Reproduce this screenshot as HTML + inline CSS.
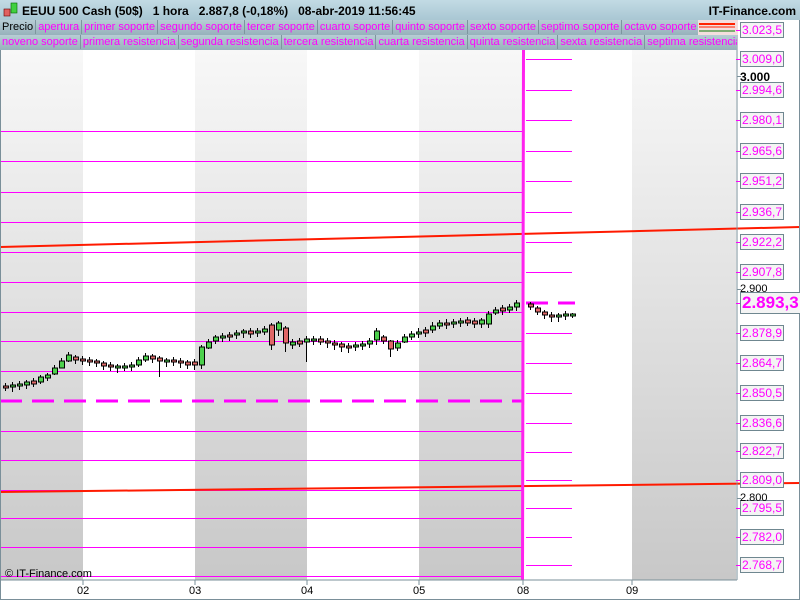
<!DOCTYPE html>
<html><head><meta charset="utf-8"><style>
body{margin:0;width:800px;height:600px;overflow:hidden;background:#fff;font-family:"Liberation Sans",sans-serif;position:relative}
.hdr{position:absolute;left:0;top:0;width:800px;height:20px;background:linear-gradient(#c2dbe4,#a9c7d3);font-size:12px;font-weight:bold;color:#000}
.leg{position:absolute;left:0;height:15px;background:linear-gradient(#b7cdd5,#97b1bb);width:737px;font-size:11px;white-space:nowrap;overflow:hidden}
.leg span{display:inline-block;height:14px;line-height:14px;padding:0 2px;border-right:1px solid #7d959e;color:#ff00ff}
.lbl{position:absolute;left:740px;height:14px;line-height:14px;font-size:12px;color:#ff00ff;border:1px solid #6f8790;background:#f4f4f4;padding:0 1px}
.tk{position:absolute;width:4px;height:1px;background:#ff00ff;left:736px}
.gl{position:absolute;left:740px;font-size:11px;color:#000}
.xl{position:absolute;top:585px;font-size:11px;color:#000}
.hl{position:absolute;height:1px;background:#ff00ff}
.g{fill:#4cd04c;stroke:#000}
.r{fill:#e06868;stroke:#000}
</style></head><body>
<svg width="800" height="600" style="position:absolute;left:0;top:0">
<defs><linearGradient id="g" x1="0" y1="0" x2="0" y2="1"><stop offset="0" stop-color="#f8f8f8"/><stop offset="1" stop-color="#c8c8c8"/></linearGradient></defs>
<rect x="0" y="48" width="737" height="532" fill="#fff"/>
<rect x="1" y="48" width="82" height="532" fill="url(#g)"/>
<rect x="195" y="48" width="112" height="532" fill="url(#g)"/>
<rect x="419" y="48" width="104" height="532" fill="url(#g)"/>
<rect x="632" y="48" width="104" height="532" fill="url(#g)"/>
</svg>
<div class="hl" style="left:0;width:522px;top:131px"></div><div class="hl" style="left:0;width:522px;top:161px"></div><div class="hl" style="left:0;width:522px;top:192px"></div><div class="hl" style="left:0;width:522px;top:222px"></div><div class="hl" style="left:0;width:522px;top:252px"></div><div class="hl" style="left:0;width:522px;top:282px"></div><div class="hl" style="left:0;width:522px;top:312px"></div><div class="hl" style="left:0;width:522px;top:341px"></div><div class="hl" style="left:0;width:522px;top:371px"></div><div class="hl" style="left:0;width:522px;top:431px"></div><div class="hl" style="left:0;width:522px;top:460px"></div><div class="hl" style="left:0;width:522px;top:490px"></div><div class="hl" style="left:0;width:522px;top:518px"></div><div class="hl" style="left:0;width:522px;top:547px"></div><div class="hl" style="left:0;width:522px;top:576px"></div>
<div class="hl" style="left:526px;width:46px;top:59px"></div><div class="hl" style="left:526px;width:46px;top:90px"></div><div class="hl" style="left:526px;width:46px;top:120px"></div><div class="hl" style="left:526px;width:46px;top:151px"></div><div class="hl" style="left:526px;width:46px;top:181px"></div><div class="hl" style="left:526px;width:46px;top:212px"></div><div class="hl" style="left:526px;width:46px;top:242px"></div><div class="hl" style="left:526px;width:46px;top:272px"></div><div class="hl" style="left:526px;width:46px;top:333px"></div><div class="hl" style="left:526px;width:46px;top:363px"></div><div class="hl" style="left:526px;width:46px;top:393px"></div><div class="hl" style="left:526px;width:46px;top:423px"></div><div class="hl" style="left:526px;width:46px;top:452px"></div><div class="hl" style="left:526px;width:46px;top:480px"></div><div class="hl" style="left:526px;width:46px;top:508px"></div><div class="hl" style="left:526px;width:46px;top:537px"></div><div class="hl" style="left:526px;width:46px;top:565px"></div>
<svg width="800" height="600" style="position:absolute;left:0;top:0">
<line x1="0" y1="401" x2="522" y2="401" stroke="#ff00ff" stroke-width="3" stroke-dasharray="22,10"/>
<line x1="526" y1="303" x2="575" y2="303" stroke="#ff00ff" stroke-width="3" stroke-dasharray="22,10"/>
<line x1="0" y1="247" x2="800" y2="227" stroke="#ff1a00" stroke-width="2"/>
<line x1="0" y1="492" x2="800" y2="483" stroke="#ff1a00" stroke-width="2"/>
<path d="M522 48 L525 48 L524 580 L521 580 Z" fill="#ff22ee"/>
<path stroke="#000" stroke-width="1" fill="none" d="M5.5 383V391M12.5 382V392M19.5 381V390M26.5 380V389M33.5 378V387M40.5 375V384M47.5 373V381M54.5 365V375M61.5 358V368M68.5 352V362M75.5 355V364M82.5 356V365M89.5 357V366M96.5 359V367M103.5 361V370M110.5 362V371M117.5 364V373M124.5 363V371M131.5 362V371M138.5 357V367M145.5 353V362M152.5 354V363M159.5 356V377M166.5 358V367M173.5 357V366M180.5 358V368M187.5 360V369M194.5 359V370M201.5 345V369M208.5 339V349M215.5 335V344M222.5 333V342M229.5 332V341M236.5 330V339M243.5 329V338M250.5 328V338M257.5 328V337M264.5 326V335M271.5 323V350M278.5 321V336M285.5 326V352M292.5 339V349M299.5 338V347M306.5 336V362M313.5 336V345M320.5 336V345M327.5 338V348M334.5 340V350M341.5 342V352M348.5 343V353M355.5 342V351M362.5 341V350M369.5 338V348M376.5 328V345M383.5 335V344M390.5 340V357M397.5 340V351M404.5 334V343M411.5 331V340M418.5 328V338M425.5 327V337M432.5 322V333M439.5 320V329M446.5 319V329M453.5 319V328M460.5 318V327M467.5 317V326M474.5 318V328M481.5 318V328M488.5 311V328M495.5 307V315M502.5 305V315M509.5 304V313M516.5 300V311M530.5 302V310M537.5 306V315M544.5 310V319M551.5 312V322M558.5 313V322M565.5 311V320M572.5 313V318"/>
<g stroke-width="1">
<rect class="r" x="3.5" y="386" width="5" height="2"/><rect class="g" x="10.5" y="385" width="5" height="2"/><rect class="g" x="17.5" y="384" width="5" height="2"/><rect class="g" x="24.5" y="382" width="5" height="3"/><rect class="r" x="31.5" y="381" width="5" height="3"/><rect class="g" x="38.5" y="377" width="5" height="5"/><rect class="g" x="45.5" y="375" width="5" height="3"/><rect class="g" x="52.5" y="368" width="5" height="6"/><rect class="g" x="59.5" y="361" width="5" height="7"/><rect class="g" x="66.5" y="355" width="5" height="6"/><rect class="r" x="73.5" y="357" width="5" height="3"/><rect class="r" x="80.5" y="359" width="5" height="2"/><rect class="r" x="87.5" y="360" width="5" height="2"/><rect class="r" x="94.5" y="361" width="5" height="2"/><rect class="r" x="101.5" y="363" width="5" height="3"/><rect class="r" x="108.5" y="365" width="5" height="2"/><rect class="g" x="115.5" y="366" width="5" height="2"/><rect class="g" x="122.5" y="366" width="5" height="2"/><rect class="g" x="129.5" y="365" width="5" height="2"/><rect class="g" x="136.5" y="360" width="5" height="5"/><rect class="g" x="143.5" y="356" width="5" height="4"/><rect class="r" x="150.5" y="356" width="5" height="3"/><rect class="r" x="157.5" y="358" width="5" height="3"/><rect class="g" x="164.5" y="360" width="5" height="2"/><rect class="r" x="171.5" y="360" width="5" height="2"/><rect class="r" x="178.5" y="361" width="5" height="2"/><rect class="r" x="185.5" y="362" width="5" height="3"/><rect class="r" x="192.5" y="362" width="5" height="3"/><rect class="g" x="199.5" y="347" width="5" height="18"/><rect class="g" x="206.5" y="342" width="5" height="6"/><rect class="g" x="213.5" y="337" width="5" height="4"/><rect class="g" x="220.5" y="336" width="5" height="2"/><rect class="r" x="227.5" y="335" width="5" height="2"/><rect class="g" x="234.5" y="333" width="5" height="2"/><rect class="g" x="241.5" y="331" width="5" height="2"/><rect class="r" x="248.5" y="331" width="5" height="3"/><rect class="g" x="255.5" y="331" width="5" height="2"/><rect class="g" x="262.5" y="329" width="5" height="3"/><rect class="r" x="269.5" y="325" width="5" height="20"/><rect class="g" x="276.5" y="323" width="5" height="7"/><rect class="r" x="283.5" y="328" width="5" height="15"/><rect class="g" x="290.5" y="342" width="5" height="3"/><rect class="r" x="297.5" y="341" width="5" height="3"/><rect class="g" x="304.5" y="339" width="5" height="3"/><rect class="g" x="311.5" y="339" width="5" height="2"/><rect class="r" x="318.5" y="339" width="5" height="3"/><rect class="r" x="325.5" y="341" width="5" height="2"/><rect class="r" x="332.5" y="343" width="5" height="2"/><rect class="r" x="339.5" y="344" width="5" height="3"/><rect class="r" x="346.5" y="346" width="5" height="2"/><rect class="g" x="353.5" y="345" width="5" height="2"/><rect class="g" x="360.5" y="344" width="5" height="2"/><rect class="g" x="367.5" y="341" width="5" height="3"/><rect class="g" x="374.5" y="331" width="5" height="9"/><rect class="r" x="381.5" y="337" width="5" height="4"/><rect class="r" x="388.5" y="341" width="5" height="8"/><rect class="g" x="395.5" y="343" width="5" height="5"/><rect class="g" x="402.5" y="337" width="5" height="5"/><rect class="g" x="409.5" y="334" width="5" height="3"/><rect class="g" x="416.5" y="332" width="5" height="2"/><rect class="r" x="423.5" y="330" width="5" height="3"/><rect class="g" x="430.5" y="326" width="5" height="4"/><rect class="g" x="437.5" y="323" width="5" height="3"/><rect class="r" x="444.5" y="323" width="5" height="2"/><rect class="g" x="451.5" y="322" width="5" height="2"/><rect class="g" x="458.5" y="321" width="5" height="2"/><rect class="r" x="465.5" y="320" width="5" height="3"/><rect class="r" x="472.5" y="321" width="5" height="3"/><rect class="g" x="479.5" y="320" width="5" height="4"/><rect class="g" x="486.5" y="314" width="5" height="10"/><rect class="g" x="493.5" y="310" width="5" height="3"/><rect class="r" x="500.5" y="308" width="5" height="3"/><rect class="g" x="507.5" y="307" width="5" height="3"/><rect class="g" x="514.5" y="303" width="5" height="4"/><rect class="r" x="528.5" y="304" width="5" height="3"/><rect class="r" x="535.5" y="308" width="5" height="4"/><rect class="r" x="542.5" y="312" width="5" height="3"/><rect class="r" x="549.5" y="315" width="5" height="2"/><rect class="g" x="556.5" y="315" width="5" height="2"/><rect class="g" x="563.5" y="314" width="5" height="2"/><rect class="g" x="570.5" y="314" width="5" height="2"/>
</g>
<line x1="737" y1="20" x2="737" y2="580" stroke="#7a8f99"/>
<line x1="0" y1="580" x2="737" y2="580" stroke="#7a8f99"/>
<path stroke="#7a8f99" d="M83 580V585M195 580V585M307 580V585M419 580V585M523 580V585M632 580V585"/>
<path stroke="#7a8f99" d="M737 76.5H741M737 289.5H741M737 498.5H741"/>
<rect x="0.5" y="0.5" width="799" height="599" fill="none" stroke="#7a8f99"/>
</svg>
<div class="hdr"><svg width="20" height="20" style="position:absolute;left:0;top:0"><rect x="4" y="9" width="6" height="7" fill="#e06060" stroke="#600" stroke-width=".6"/><rect x="11" y="3" width="6" height="10" fill="#40d040" stroke="#060" stroke-width=".6"/></svg><span style="position:absolute;left:22px;top:4px">EEUU 500 Cash (50$)&nbsp;&nbsp;&nbsp;1 hora&nbsp;&nbsp;&nbsp;2.887,8 (-0,18%)&nbsp;&nbsp;&nbsp;08-abr-2019 11:56:45</span><span style="position:absolute;right:4px;top:4px">IT-Finance.com</span></div>
<div class="leg" style="top:20px;width:698px"><span style="color:#000">Precio</span><span>apertura</span><span>primer soporte</span><span>segundo soporte</span><span>tercer soporte</span><span>cuarto soporte</span><span>quinto soporte</span><span>sexto soporte</span><span>septimo soporte</span><span>octavo soporte</span></div>
<svg width="40" height="15" style="position:absolute;left:698px;top:20px"><rect width="40" height="15" fill="#f4dede"/><line x1="1" y1="4" x2="37" y2="4" stroke="#ff2200" stroke-width="2"/><line x1="1" y1="7" x2="37" y2="7" stroke="#ff2200"/><line x1="1" y1="11" x2="37" y2="11" stroke="#0a7a0a"/></svg>
<div class="leg" style="top:35px"><span>noveno soporte</span><span>primera resistencia</span><span>segunda resistencia</span><span>tercera resistencia</span><span>cuarta resistencia</span><span>quinta resistencia</span><span>sexta resistencia</span><span>septima resistencia</span></div>
<div class="tk" style="top:30px"></div><div class="lbl" style="top:22px">3.023,5</div>
<div class="tk" style="top:59px"></div><div class="lbl" style="top:51px">3.009,0</div>
<div class="tk" style="top:90px"></div><div class="lbl" style="top:82px">2.994,6</div>
<div class="tk" style="top:120px"></div><div class="lbl" style="top:112px">2.980,1</div>
<div class="tk" style="top:151px"></div><div class="lbl" style="top:143px">2.965,6</div>
<div class="tk" style="top:181px"></div><div class="lbl" style="top:173px">2.951,2</div>
<div class="tk" style="top:212px"></div><div class="lbl" style="top:204px">2.936,7</div>
<div class="tk" style="top:242px"></div><div class="lbl" style="top:234px">2.922,2</div>
<div class="tk" style="top:272px"></div><div class="lbl" style="top:264px">2.907,8</div>
<div class="tk" style="top:303px"></div><div class="lbl" style="top:292px;height:20px;line-height:20px;font-size:17px;font-weight:bold">2.893,3</div>
<div class="tk" style="top:333px"></div><div class="lbl" style="top:325px">2.878,9</div>
<div class="tk" style="top:363px"></div><div class="lbl" style="top:355px">2.864,7</div>
<div class="tk" style="top:393px"></div><div class="lbl" style="top:385px">2.850,5</div>
<div class="tk" style="top:423px"></div><div class="lbl" style="top:415px">2.836,6</div>
<div class="tk" style="top:451px"></div><div class="lbl" style="top:443px">2.822,7</div>
<div class="tk" style="top:480px"></div><div class="lbl" style="top:472px">2.809,0</div>
<div class="tk" style="top:508px"></div><div class="lbl" style="top:500px">2.795,5</div>
<div class="tk" style="top:537px"></div><div class="lbl" style="top:529px">2.782,0</div>
<div class="tk" style="top:565px"></div><div class="lbl" style="top:557px">2.768,7</div>
<div class="gl" style="top:70px;font-weight:bold;font-size:12px">3.000</div>
<div class="gl" style="top:283px">2.900</div>
<div class="gl" style="top:492px">2.800</div>
<div style="position:absolute;left:5px;top:568px;font-size:11px">© IT-Finance.com</div>
<div class="xl" style="left:77px">02</div><div class="xl" style="left:189px">03</div><div class="xl" style="left:301px">04</div><div class="xl" style="left:413px">05</div><div class="xl" style="left:517px">08</div><div class="xl" style="left:626px">09</div>
</body></html>
